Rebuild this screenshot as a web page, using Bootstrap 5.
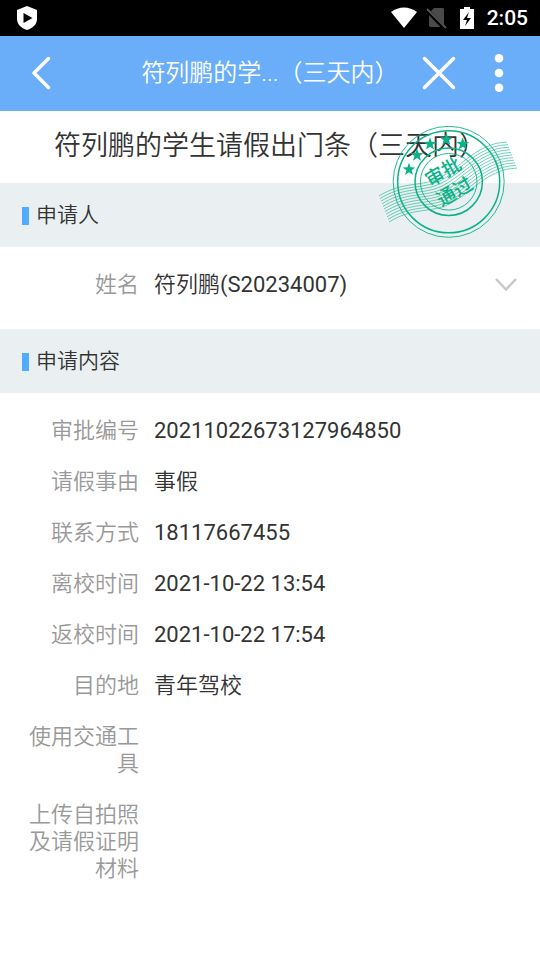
<!DOCTYPE html>
<html lang="zh-CN">
<head>
<meta charset="utf-8">
<meta name="viewport" content="width=device-width, initial-scale=1">
<title>学生请假出门条</title>
<link href="https://cdn.jsdelivr.net/npm/bootstrap@5.3.0/dist/css/bootstrap.min.css" rel="stylesheet">
<style>
  body { font-family: Roboto, "Noto Sans CJK SC", sans-serif; font-size: 22px; line-height: 27px; font-weight: 350; color: #333; background: #fff; }
  svg { display: block; }
  .status-bar { height: 36px; background: #000; color: #fff; padding: 0 12px 0 16px; font-size: 21px; font-weight: 500; }
  .status-icons { gap: 10px; }
  .app-bar { height: 75px; background: #6aaef9; color: #fff; padding-bottom: 2px; }
  .app-title { font-size: 24px; line-height: 36px; }
  .bar-side { width: 124px; }
  .bar-start { padding-left: 30px; }
  .bar-end { padding: 0 36px 0 5px; }
  .icon-btn { background: none; border: 0; padding: 0; color: inherit; }
  .form-title { font-size: 27px; line-height: 40px; font-weight: 350; padding: 15px 0 17px; }
  .section-head { background: #eaeff2; font-size: 21px; line-height: 32px; font-weight: 350; padding: 16px 22px; }
  .section-head::before { content: ""; width: 7px; height: 18px; margin: 1px 7px 0 0; background: #50acff; }
  .field-list { padding: 24px 22px 31px; gap: 24px; }
  .field-row { gap: 15px; }
  .field-row dt { width: 117px; color: #999; font-weight: 350; }
  .latin { font-weight: 400; }
  .stamp { top: 11px; right: 20px; }
  .stamp-text { font-size: 19px; font-weight: 500; }
</style>
<script src="https://cdn.jsdelivr.net/npm/bootstrap@5.3.0/dist/js/bootstrap.bundle.min.js"></script>
</head>
<body>
<div class="status-bar d-flex align-items-center justify-content-between">
  <svg width="22" height="26" viewBox="0 0 22 26" aria-hidden="true"><path d="M11 1 21 5v9c0 5-4 9-10 11C5 23 1 19 1 14V5z" fill="#fff"/><path d="M7.500 8v10l9-5z"/></svg>
  <div class="status-icons d-flex align-items-center">
    <svg width="26" height="22" viewBox="0 0 26 22" aria-hidden="true"><path d="M0 5C8-1 18-1 26 5L13 21z" fill="#fff"/></svg>
    <svg width="20" height="22" viewBox="0 0 20 22" aria-hidden="true"><path d="M7 1h9l1 1v17l-1 1H3l-1-1V6z" fill="#4a4a4a"/><path d="M0 3 18 22" stroke="#000" stroke-width="4"/><path d="M0 2 19 21" stroke="#555" stroke-width="1.800"/></svg>
    <svg width="20" height="22" viewBox="-3 0 20 22" aria-hidden="true"><path d="M0 2h4V0h6v2h4v20H0z" fill="#fff"/><path d="M9 5 3 13h4l-2 6 6-8H7z"/></svg>
    <span>2:05</span>
  </div>
</div>
<header class="app-bar d-flex align-items-center justify-content-between">
  <div class="bar-side bar-start d-flex">
    <button type="button" class="icon-btn" aria-label="返回"><svg width="24" height="36" viewBox="0 0 24 36" fill="none" stroke="currentColor" stroke-width="3.500" stroke-linecap="round" stroke-linejoin="round"><path d="M18.500 3.500 4 18l14.500 14.500"/></svg></button>
  </div>
  <div class="app-title text-nowrap">符列鹏的学...（三天内）</div>
  <div class="bar-side bar-end d-flex justify-content-between">
    <button type="button" class="icon-btn" aria-label="关闭"><svg width="36" height="36" viewBox="0 0 36 36" fill="none" stroke="currentColor" stroke-width="3.500" stroke-linecap="round"><path d="M3.500 3.500l29 29m0-29-29 29"/></svg></button>
    <button type="button" class="icon-btn" aria-label="更多"><svg width="10" height="40" viewBox="0 0 10 40" fill="currentColor"><circle cx="5" cy="5.300" r="4.300"/><circle cx="5" cy="20" r="4.300"/><circle cx="5" cy="34.700" r="4.300"/></svg></button>
  </div>
</header>
<main class="position-relative">
  <h1 class="form-title text-center mb-0">符列鹏的学生请假出门条（三天内）</h1>
  <section>
    <h2 class="section-head d-flex align-items-center mb-0">申请人</h2>
    <dl class="field-list d-flex flex-column mb-0">
      <div class="field-row d-flex">
        <dt class="text-end">姓名</dt><dd class="flex-grow-1 mb-0">符列鹏<span class="latin">(S20234007)</span></dd>
        <button type="button" class="icon-btn" aria-label="展开"><svg width="24" height="16" viewBox="0 0 24 16" fill="none" stroke="#c8c8cc" stroke-width="2.500"><path d="M2 2l10 10.500L22 2"/></svg></button>
      </div>
    </dl>
  </section>
  <section>
    <h2 class="section-head d-flex align-items-center mb-0">申请内容</h2>
    <dl class="field-list d-flex flex-column mb-0">
      <div class="field-row d-flex"><dt class="text-end">审批编号</dt><dd class="latin mb-0">20211022673127964850</dd></div>
      <div class="field-row d-flex"><dt class="text-end">请假事由</dt><dd class="mb-0">事假</dd></div>
      <div class="field-row d-flex"><dt class="text-end">联系方式</dt><dd class="latin mb-0">18117667455</dd></div>
      <div class="field-row d-flex"><dt class="text-end">离校时间</dt><dd class="latin mb-0">2021-10-22 13:54</dd></div>
      <div class="field-row d-flex"><dt class="text-end">返校时间</dt><dd class="latin mb-0">2021-10-22 17:54</dd></div>
      <div class="field-row d-flex"><dt class="text-end">目的地</dt><dd class="mb-0">青年驾校</dd></div>
      <div class="field-row d-flex"><dt class="text-end">使用交通工具</dt><dd class="mb-0"></dd></div>
      <div class="field-row d-flex"><dt class="text-end">上传自拍照及请假证明材料</dt><dd class="mb-0"></dd></div>
    </dl>
  </section>
  <svg class="stamp position-absolute" width="144" height="120" viewBox="0 0 144 120" role="img" aria-label="审批通过">
    <defs>
      <path id="wave" d="M3 74C24 61 39 64 56 59S89 36 104 28s20-7 27-8"/>
      <path id="star" d="M0-6.800 1.600-2.200 6.500-2.100 2.600.8 4 5.500 0 2.700-4 5.500-2.600.8-6.500-2.100-1.600-2.200z"/>
    </defs>
    <g fill="none" stroke="#0bb287">
      <g stroke-width=".6">
        <use href="#wave"/><use href="#wave" x="1" y="2.600"/><use href="#wave" x="2" y="5.200"/><use href="#wave" x="3" y="7.800"/><use href="#wave" x="4" y="10.400"/><use href="#wave" x="5" y="13"/><use href="#wave" x="6" y="15.600"/><use href="#wave" x="7" y="18.200"/><use href="#wave" x="8" y="20.800"/><use href="#wave" x="9" y="23.400"/><use href="#wave" x="10" y="26"/>
      </g>
      <circle cx="72.700" cy="59.800" r="55.500" stroke-width=".9"/>
      <circle cx="72.700" cy="59.800" r="51" stroke-width="1.500"/>
      <circle cx="72.700" cy="59.800" r="33.700" stroke-width="1.500"/>
      <circle cx="72.700" cy="59.800" r="28.300" stroke-width=".9"/>
    </g>
    <g fill="#0bb287">
      <use href="#star" x="33" y="47.500"/><use href="#star" x="41" y="33.300"/><use href="#star" x="54" y="22"/><use href="#star" x="70.300" y="17.500"/><use href="#star" x="86.700" y="22"/>
      <g class="stamp-text" text-anchor="middle" transform="rotate(-30 73 60)">
        <text x="73" y="55">审批</text>
        <text x="73" y="78">通过</text>
      </g>
    </g>
  </svg>
</main>
</body>
</html>
